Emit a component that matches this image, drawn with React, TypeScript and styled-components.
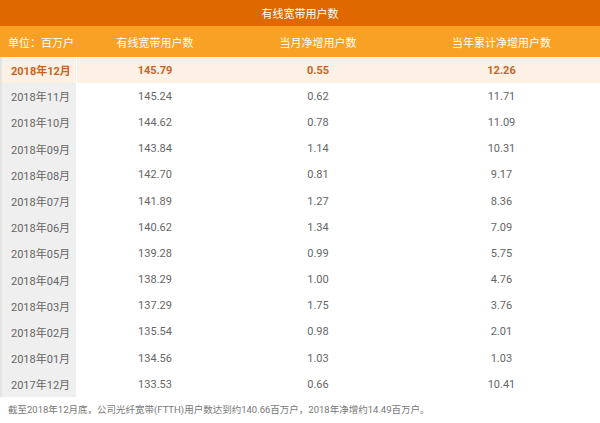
import React from "react";
import styled, { createGlobalStyle } from "styled-components";

const G = createGlobalStyle`
  body { margin: 0; background: #fff; font-family: Roboto, "Noto Sans CJK SC", sans-serif; }
`;
const Title = styled.div`
  height: 26px; background: #e06800; color: #fff; font-size: 11px;
  display: flex; align-items: center; justify-content: center;
`;
const cols = "77px 156px 170px 1fr";
const Head = styled.div`
  display: grid; grid-template-columns: ${cols}; height: 31px; background: #f9a125;
  color: #fff; font-size: 11px; align-items: center;
`;
const HCell = styled.div<{ $left?: boolean }>`
  text-align: ${p => (p.$left ? "left" : "center")};
  padding-left: ${p => (p.$left ? "8px" : "0")};
`;
const Row = styled.div<{ $hl?: boolean }>`
  display: grid; grid-template-columns: ${cols}; height: 26.2px; align-items: stretch;
  background: ${p => (p.$hl ? "#fdf1e6" : "#fff")};
  color: ${p => (p.$hl ? "#c8641e" : "#666")};
  font-weight: ${p => (p.$hl ? 700 : 400)};
  font-size: 11px;
`;
const Cell = styled.div<{ $first?: boolean; $hl?: boolean }>`
  display: flex; align-items: center;
  justify-content: ${p => (p.$first ? "flex-start" : "center")};
  padding-left: ${p => (p.$first ? "9px" : "0")};
  background: ${p => (p.$first && !p.$hl ? "#efefef" : "transparent")};
  border-right: ${p => (p.$first ? "1px solid #fff" : "none")};
  border-left: ${p => (p.$first ? "2px solid #e4e4e4" : "none")};
`;
const Note = styled.div`
  font-size: 9.5px; color: #777; padding: 5px 0 0 8px;
`;

const data = [
  ["2018年12月", "145.79", "0.55", "12.26"],
  ["2018年11月", "145.24", "0.62", "11.71"],
  ["2018年10月", "144.62", "0.78", "11.09"],
  ["2018年09月", "143.84", "1.14", "10.31"],
  ["2018年08月", "142.70", "0.81", "9.17"],
  ["2018年07月", "141.89", "1.27", "8.36"],
  ["2018年06月", "140.62", "1.34", "7.09"],
  ["2018年05月", "139.28", "0.99", "5.75"],
  ["2018年04月", "138.29", "1.00", "4.76"],
  ["2018年03月", "137.29", "1.75", "3.76"],
  ["2018年02月", "135.54", "0.98", "2.01"],
  ["2018年01月", "134.56", "1.03", "1.03"],
  ["2017年12月", "133.53", "0.66", "10.41"],
];

export default function App() {
  return (
    <>
      <G />
      <Title>有线宽带用户数</Title>
      <Head>
        <HCell $left>单位：百万户</HCell>
        <HCell>有线宽带用户数</HCell>
        <HCell>当月净增用户数</HCell>
        <HCell>当年累计净增用户数</HCell>
      </Head>
      {data.map((r, i) => (
        <Row key={i} $hl={i === 0}>
          {r.map((c, j) => (
            <Cell key={j} $first={j === 0} $hl={i === 0}>{c}</Cell>
          ))}
        </Row>
      ))}
      <Note>截至2018年12月底，公司光纤宽带(FTTH)用户数达到约140.66百万户，2018年净增约14.49百万户。</Note>
    </>
  );
}
